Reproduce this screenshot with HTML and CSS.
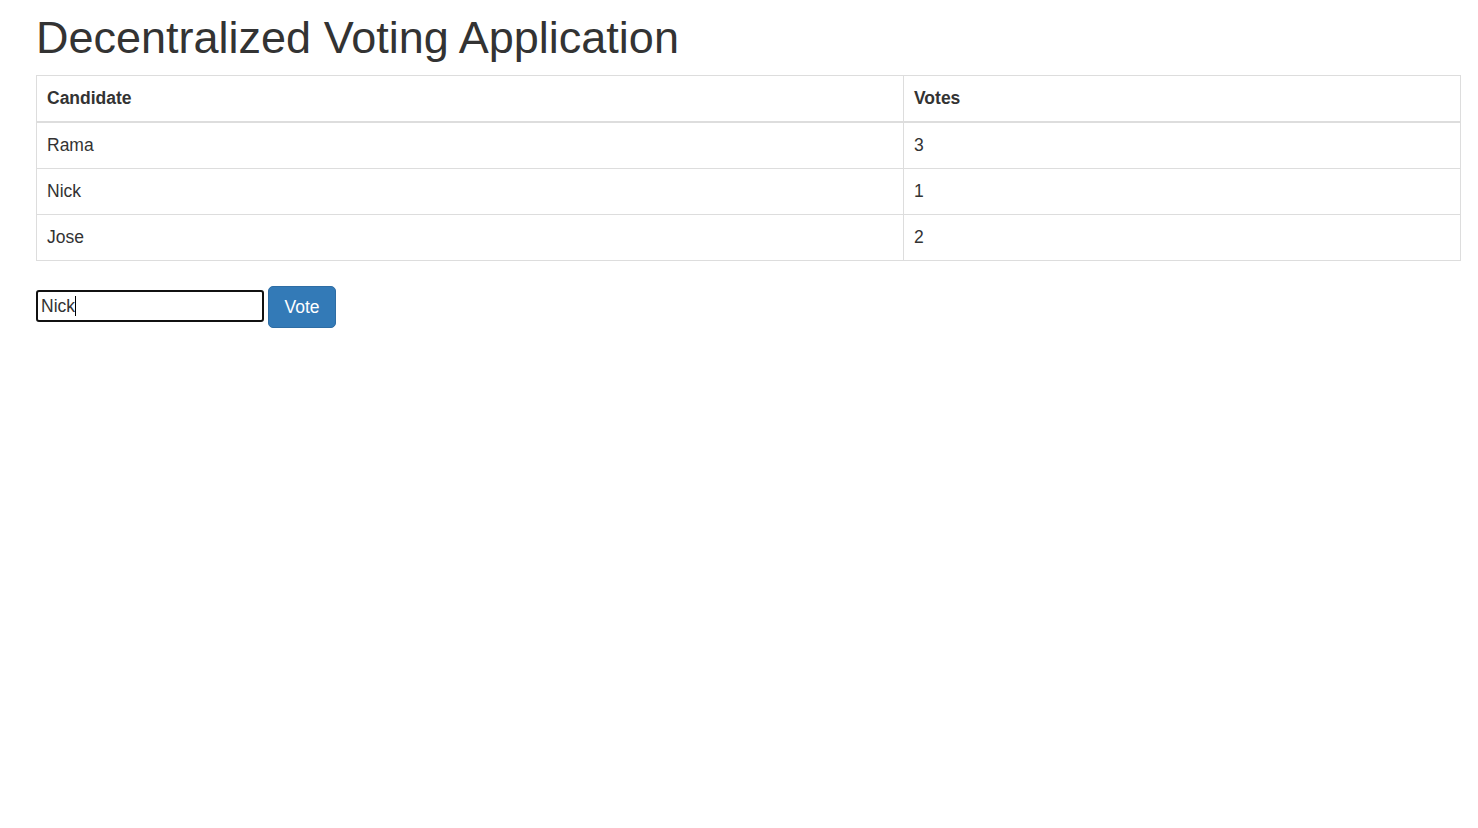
FILE: index.html
```html
<!DOCTYPE html>
<html lang="en">
<head>
<meta charset="utf-8">
<title>Decentralized Voting Application</title>
<link rel="stylesheet" href="styles.css">
</head>
<body>
<div class="page">
  <h1 class="title">Decentralized Voting Application</h1>
  <table class="votes-table">
    <colgroup>
      <col class="col-candidate">
      <col class="col-votes">
    </colgroup>
    <thead>
      <tr><th>Candidate</th><th>Votes</th></tr>
    </thead>
    <tbody>
      <tr><td>Rama</td><td>3</td></tr>
      <tr><td>Nick</td><td>1</td></tr>
      <tr><td>Jose</td><td>2</td></tr>
    </tbody>
  </table>
  <form class="vote-form" onsubmit="return false;">
    <div class="field"><span class="field-text">Nick</span><span class="caret"></span></div>
    <button type="button" class="btn-vote">Vote</button>
  </form>
</div>
</body>
</html>
```

FILE: styles.css
```css
html, body {
  margin: 0;
  padding: 0;
  background: #fff;
}

body {
  font-family: "Liberation Sans", Arial, Helvetica, sans-serif;
  font-size: 17.5px;
  line-height: 25px;
  color: #333;
}

.page {
  padding: 13px 17px 0 36px;
}

.title {
  margin: 0 0 12.5px 0;
  font-size: 45px;
  font-weight: 500;
  line-height: 49.5px;
  color: #333;
}

.votes-table {
  width: 1425px;
  border-collapse: collapse;
  border-spacing: 0;
  border: 1px solid #ddd;
  margin-bottom: 25px;
}

.col-candidate {
  width: 867px;
}

.votes-table th,
.votes-table td {
  padding: 10px;
  text-align: left;
  vertical-align: top;
  border: 1px solid #ddd;
  line-height: 25px;
}

.votes-table th {
  font-weight: bold;
  border-bottom: 2px solid #ddd;
  vertical-align: bottom;
}

.vote-form {
  display: flex;
  align-items: flex-start;
  gap: 4px;
  margin: 0;
}

.field {
  box-sizing: border-box;
  width: 228px;
  height: 32px;
  margin-top: 4px;
  border: 2px solid #111;
  border-radius: 3px;
  padding: 0 3px;
  display: flex;
  align-items: center;
  font-size: 17.5px;
  color: #333;
  background: #fff;
}

.caret {
  display: inline-block;
  width: 1px;
  height: 20px;
  background: #000;
}

.btn-vote {
  box-sizing: border-box;
  width: 68px;
  height: 42px;
  padding: 7.5px 0;
  font-family: "Liberation Sans", Arial, Helvetica, sans-serif;
  font-size: 17.5px;
  line-height: 25px;
  color: #fff;
  background: #337ab7;
  border: 1px solid #2e6da4;
  border-radius: 5px;
  cursor: pointer;
}
```
